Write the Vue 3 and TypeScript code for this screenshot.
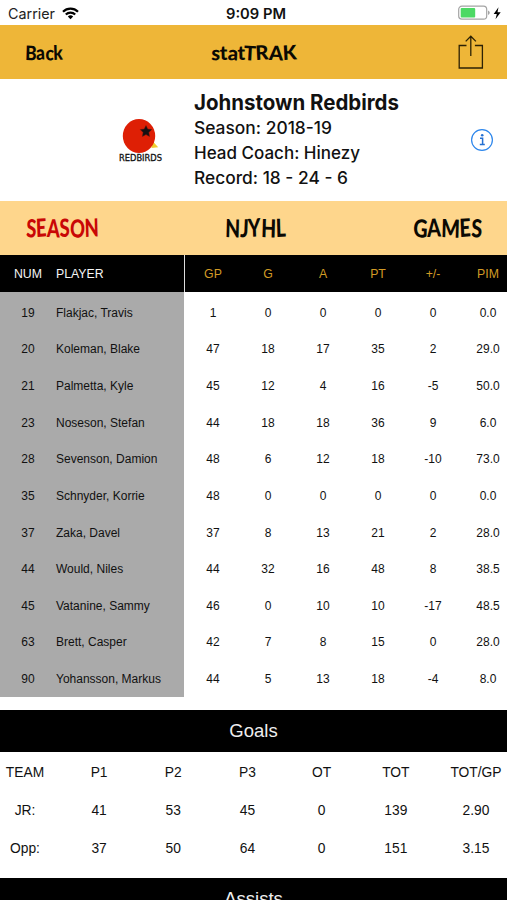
<script setup lang="ts">
interface Player {
  num: number
  name: string
  stats: string[]
}

const statHeads: string[] = ['GP', 'G', 'A', 'PT', '+/-', 'PIM']
const players: Player[] = [
  { num: 19, name: 'Flakjac, Travis', stats: ['1', '0', '0', '0', '0', '0.0'] },
  { num: 20, name: 'Koleman, Blake', stats: ['47', '18', '17', '35', '2', '29.0'] },
  { num: 21, name: 'Palmetta, Kyle', stats: ['45', '12', '4', '16', '-5', '50.0'] },
  { num: 23, name: 'Noseson, Stefan', stats: ['44', '18', '18', '36', '9', '6.0'] },
  { num: 28, name: 'Sevenson, Damion', stats: ['48', '6', '12', '18', '-10', '73.0'] },
  { num: 35, name: 'Schnyder, Korrie', stats: ['48', '0', '0', '0', '0', '0.0'] },
  { num: 37, name: 'Zaka, Davel', stats: ['37', '8', '13', '21', '2', '28.0'] },
  { num: 44, name: 'Would, Niles', stats: ['44', '32', '16', '48', '8', '38.5'] },
  { num: 45, name: 'Vatanine, Sammy', stats: ['46', '0', '10', '10', '-17', '48.5'] },
  { num: 63, name: 'Brett, Casper', stats: ['42', '7', '8', '15', '0', '28.0'] },
  { num: 90, name: 'Yohansson, Markus', stats: ['44', '5', '13', '18', '-4', '8.0'] },
]
const goals: string[][] = [
  ['TEAM', 'P1', 'P2', 'P3', 'OT', 'TOT', 'TOT/GP'],
  ['JR:', '41', '53', '45', '0', '139', '2.90'],
  ['Opp:', '37', '50', '64', '0', '151', '3.15'],
]
</script>

<template>
  <div class="screen">
    <div class="status">
      <div class="carrier">
        <svg width="48" height="16"><text x="0" y="13.5" textLength="47" lengthAdjust="spacingAndGlyphs" class="status-text">Carrier</text></svg>
        <svg class="wifi" width="17" height="13" viewBox="0 0 17 13">
          <path d="M1 4.7a10.7 10.7 0 0 1 15 0M3.8 7.5a6.7 6.7 0 0 1 9.4 0" fill="none" stroke="#000" stroke-width="2.2" />
          <path d="M5.8 9.5a3.9 3.9 0 0 1 5.4 0L8.5 12.3z" />
        </svg>
      </div>
      <svg width="62" height="16"><text x="1" y="13.5" textLength="60" lengthAdjust="spacingAndGlyphs" class="status-text clock">9:09 PM</text></svg>
      <div class="power">
        <svg width="45" height="16" viewBox="0 0 45 16">
          <rect x=".7" y="1.2" width="28" height="13" rx="3.2" fill="#fff" stroke="#a4a4a4" stroke-width="1.2" />
          <rect x="2.7" y="3" width="14.5" height="9.4" rx="1" fill="#4cd964" />
          <path d="M30 5.4q1.8.8 1.8 2.3T30 10z" fill="#a4a4a4" />
          <path d="M40.5 2.2 35.7 9h3.1l-1.3 5.2 5.2-7h-3.2z" />
        </svg>
      </div>
    </div>

    <header class="nav">
      <svg class="back" width="40" height="32"><text x="0" y="24" textLength="38" lengthAdjust="spacingAndGlyphs" rotate="2 -3 3 -2" class="marker nav-text">Back</text></svg>
      <svg width="88" height="32"><text x="1" y="24" textLength="86" lengthAdjust="spacingAndGlyphs" rotate="3 -2 3 -2 3 -3 2 -3" class="marker nav-text">statTRAK</text></svg>
      <svg class="share" width="26" height="36" viewBox="0 0 26 36" fill="none" stroke="#2c2205" stroke-width="1.3">
        <path d="M8.5 11.5H1.2V34h23.2V11.5h-7.5M12.8 22V2.2M7.7 7.4l5.1-5.2 5.1 5.2" />
      </svg>
    </header>

    <section class="team">
      <svg class="logo" width="46" height="50" viewBox="0 0 46 50">
        <path d="M34 22.5l6.2 6.7-6.7.8z" fill="#f0cb2f" />
        <ellipse cx="21" cy="18" rx="16.2" ry="17" fill="#de1f05" />
        <path d="m28 7.6 1.7 3.5 4 .5-2.9 2.8.7 4-3.5-1.9-3.6 1.9.7-4-2.8-2.8 3.9-.5z" fill="#161012" stroke="#5b1610" stroke-width=".5" />
        <text x="1" y="42.8" textLength="43" lengthAdjust="spacingAndGlyphs" class="logo-text">REDBIRDS</text>
      </svg>
      <div class="facts">
        <svg width="210" height="25"><text x="0" y="19" textLength="205" lengthAdjust="spacingAndGlyphs" class="team-name">Johnstown Redbirds</text></svg>
        <svg width="210" height="25"><text x="0" y="19" textLength="138" lengthAdjust="spacingAndGlyphs">Season: 2018-19</text></svg>
        <svg width="210" height="25"><text x="0" y="19" textLength="166" lengthAdjust="spacingAndGlyphs">Head Coach: Hinezy</text></svg>
        <svg width="210" height="25"><text x="0" y="19" textLength="154" lengthAdjust="spacingAndGlyphs">Record: 18 - 24 - 6</text></svg>
      </div>
      <svg class="info" width="24" height="24" viewBox="0 0 24 24" fill="none" stroke="#2c86ec">
        <circle cx="12" cy="12" r="10.4" stroke-width="1.2" />
        <circle cx="12.2" cy="7.3" r="1.3" fill="#2470d2" stroke="none" />
        <path d="M10 10.3h2.6v6M9.8 16.5h5" stroke="#2470d2" stroke-width="1.5" />
      </svg>
    </section>

    <nav class="tabs">
      <svg width="76" height="38"><text x="1" y="28" textLength="73" lengthAdjust="spacingAndGlyphs" rotate="3 -3 2 -2 3 -2" class="marker tab-text active">SEASON</text></svg>
      <svg class="league" width="64" height="38"><text x="1" y="28" textLength="61" lengthAdjust="spacingAndGlyphs" rotate="2 3 -3 2 -2" class="marker tab-text">NJYHL</text></svg>
      <svg width="71" height="38"><text x="1" y="28" textLength="69" lengthAdjust="spacingAndGlyphs" rotate="3 -2 2 -3 3" class="marker tab-text">GAMES</text></svg>
    </nav>

    <section class="roster">
      <div class="row head">
        <div class="who"><span class="num">NUM</span><span>PLAYER</span></div>
        <div class="stats"><span v-for="h in statHeads" :key="h">{{ h }}</span></div>
      </div>
      <div class="body">
        <div v-for="p in players" :key="p.num" class="row">
          <div class="who"><span class="num">{{ p.num }}</span><span>{{ p.name }}</span></div>
          <div class="stats"><span v-for="(s, i) in p.stats" :key="i">{{ s }}</span></div>
        </div>
      </div>
    </section>

    <h2 class="band">Goals</h2>
    <section class="goals">
      <div v-for="(line, r) in goals" :key="r" class="line">
        <span v-for="(cell, c) in line" :key="c">{{ cell }}</span>
      </div>
    </section>
    <h2 class="band">Assists</h2>
  </div>
</template>

<style>
body {
  margin: 0;
  background: #fff;
}
</style>

<style scoped>
.screen {
  width: 507px;
  height: 900px;
  overflow: hidden;
  background: #fff;
  color: #111;
  font-family: "Liberation Sans", Arial, sans-serif;
}
svg {
  display: block;
  flex: none;
  overflow: visible;
}
.status {
  display: grid;
  grid-template-columns: 1fr 62px 1fr;
  align-items: center;
  height: 25px;
  padding-top: 1px;
  box-sizing: border-box;
}
.carrier {
  display: flex;
  align-items: center;
  gap: 6px;
  padding-left: 8px;
}
.status > svg {
  margin-left: 2px;
}
.power {
  display: flex;
  justify-content: flex-end;
  padding-right: 4px;
}
.status-text {
  font: 400 14.5px Inter, sans-serif;
  fill: #222;
}
.clock {
  font-weight: 600;
  fill: #111;
}
.nav {
  display: grid;
  grid-template-columns: 1fr 88px 1fr;
  align-items: center;
  height: 54px;
  background: #eeb638;
}
.back {
  margin-left: 25px;
}
.share {
  justify-self: end;
  margin-right: 23px;
}
.marker {
  font-family: Lato, sans-serif;
  font-weight: 900;
  fill: #0b0903;
}
.nav-text {
  font-size: 20px;
}
.team {
  display: flex;
  height: 122px;
  box-sizing: border-box;
  padding: 11px 13px 0 118px;
}
.logo {
  margin-top: 28px;
}
.logo-text {
  font: 400 8.5px "DejaVu Sans", sans-serif;
  fill: #111;
  stroke: #111;
  stroke-width: 0.3px;
}
.facts {
  flex: 1;
  margin-left: 30px;
  font: 500 17px Inter, sans-serif;
}
.facts text {
  fill: #111;
}
.facts .team-name {
  font-size: 21px;
  font-weight: 700;
  transform: translateY(1px);
}
.info {
  margin-top: 38px;
}
.tabs {
  display: flex;
  align-items: center;
  justify-content: space-between;
  height: 54px;
  padding: 0 24px 0 25px;
  background: #fed68c;
}
.tab-text {
  font-size: 25px;
}
.active {
  fill: #c90705;
}
.league {
  margin-left: -1px;
}
.row {
  display: grid;
  grid-template-columns: 184px 1fr;
  height: 36.65px;
  font-size: 12px;
}
.who {
  display: flex;
  align-items: center;
}
.num {
  width: 56px;
  text-align: center;
}
.stats {
  display: grid;
  grid-template-columns: repeat(6, 55px);
  align-items: center;
  text-align: center;
  padding-left: 1.5px;
}
.head {
  height: 37px;
  background: #000;
  color: #f5f5f5;
  font-size: 12.3px;
}
.head .stats {
  padding-left: .5px;
  border-left: 1px solid #ddd;
  color: #d29b25;
}
.body {
  height: 405px;
  padding-top: 2.4px;
  box-sizing: border-box;
  background: linear-gradient(to right, #aaa 184px, #fff 184px);
}
.band {
  display: flex;
  align-items: center;
  justify-content: center;
  height: 42px;
  margin: 13px 0 0;
  background: #000;
  color: #eee;
  font-size: 18.5px;
  font-weight: 400;
}
.goals {
  height: 126px;
  padding-top: 1px;
  box-sizing: border-box;
}
.goals + .band {
  margin-top: 0;
}
.line {
  display: grid;
  grid-template-columns: 50px repeat(5, 74.2px) 1fr;
  align-items: center;
  height: 38px;
  font-size: 13.8px;
  text-align: center;
}
.line span:nth-child(n + 2):nth-child(-n + 6) {
  transform: translateX(12px);
}
.line span:last-child {
  padding-left: 24px;
}
</style>
